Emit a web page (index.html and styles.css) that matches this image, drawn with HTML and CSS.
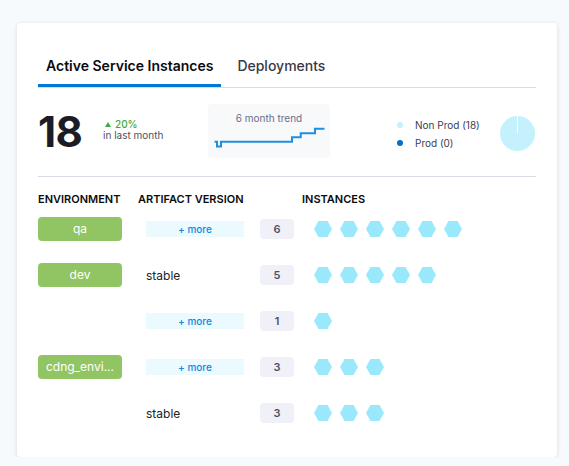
FILE: index.html
```html
<!DOCTYPE html>
<html>
<head>
<meta charset="utf-8">
<link rel="stylesheet" href="styles.css">
</head>
<body>
<div class="card">
  <div class="tabs">
    <div class="tab active">Active Service Instances</div>
    <div class="tab">Deployments</div>
  </div>
  <div class="stats">
    <div class="big">18</div>
    <div class="change">
      <div class="up"><span class="tri"></span>20%</div>
      <div class="sub">in last month</div>
    </div>
    <div class="trend">
      <div class="trend-title">6 month trend</div>
      <svg class="trend-chart" width="122" height="34" viewBox="0 0 122 34">
        <polyline points="6.5,17.7 9,17.7 9,22.5 13,22.5 13,17.7 84,17.7 84,13.3 92.7,13.3 92.7,9.3 107,9.3 107,4.7 116.5,4.7" fill="none" stroke="#1e8fe1" stroke-width="2"/>
      </svg>
    </div>
    <div class="legend">
      <div class="legend-item"><span class="dot nonprod"></span>Non Prod (18)</div>
      <div class="legend-item"><span class="dot prod"></span>Prod (0)</div>
    </div>
    <div class="pie"><span class="pie-line"></span></div>
  </div>
  <div class="table">
    <div class="th">Environment</div>
    <div class="th th-art">Artifact Version</div>
    <div class="th">Instances</div>

    <div class="cell"><span class="env">qa</span></div>
    <div class="cell art"><span class="more">+ more</span><span class="count">6</span></div>
    <div class="cell inst"><i class="hex"></i><i class="hex"></i><i class="hex"></i><i class="hex"></i><i class="hex"></i><i class="hex"></i></div>

    <div class="cell"><span class="env">dev</span></div>
    <div class="cell art"><span class="ver">stable</span><span class="count">5</span></div>
    <div class="cell inst"><i class="hex"></i><i class="hex"></i><i class="hex"></i><i class="hex"></i><i class="hex"></i></div>

    <div class="cell"></div>
    <div class="cell art"><span class="more">+ more</span><span class="count">1</span></div>
    <div class="cell inst"><i class="hex"></i></div>

    <div class="cell"><span class="env" title="cdng_environment">cdng_envi...</span></div>
    <div class="cell art"><span class="more">+ more</span><span class="count">3</span></div>
    <div class="cell inst"><i class="hex"></i><i class="hex"></i><i class="hex"></i></div>

    <div class="cell"></div>
    <div class="cell art"><span class="ver">stable</span><span class="count">3</span></div>
    <div class="cell inst"><i class="hex"></i><i class="hex"></i><i class="hex"></i></div>
  </div>
</div>
</body>
</html>
```
FILE: styles.css
```css
* { box-sizing: border-box; }
html, body { margin: 0; padding: 0; }
body {
  background: #f7fafd;
  font-family: Inter, "Noto Sans", sans-serif;
  color: #22222a;
  padding: 23px 0 0 17px;
}
.card {
  width: 540px;
  height: 434px;
  background: #fff;
  border-radius: 4px;
  box-shadow: 0 1px 4px rgba(40, 50, 80, 0.16);
  padding: 33px 21px 21px;
}
.tabs {
  display: flex;
  border-bottom: 1px solid #d9dae6;
}
.tab {
  font-size: 14px;
  line-height: 20px;
  padding: 0 8px 11px;
  margin-right: 8px;
  font-weight: 500;
  color: #383946;
}
.tab.active {
  font-weight: 600;
  color: #0b0b0d;
  box-shadow: inset 0 -3px 0 #0278d5;
}
.stats {
  height: 89px;
  display: flex;
  align-items: center;
  border-bottom: 1px solid #d9dae6;
}
.big {
  font-size: 42px;
  font-weight: 700;
  line-height: 1;
  color: #1c1c28;
  width: 65px;
  letter-spacing: -0.5px;
}
.change {
  width: 105px;
  font-size: 10px;
  line-height: 11px;
  margin-top: -4px;
}
.up {
  color: #3daa45;
  font-weight: 500;
  display: flex;
  align-items: center;
}
.tri {
  width: 0;
  height: 0;
  border-left: 3.5px solid transparent;
  border-right: 3.5px solid transparent;
  border-bottom: 5px solid #3daa45;
  margin: 0 4px 0 2px;
}
.sub { color: #4f5162; }
.trend {
  width: 122px;
  height: 54px;
  background: #f8f9fb;
  border-radius: 4px;
  margin-top: -2px;
}
.trend-title {
  text-align: center;
  font-size: 10px;
  line-height: 12px;
  color: #6b6d85;
  padding-top: 8px;
}
.trend-chart { display: block; }
.legend {
  margin-left: 67px;
  font-size: 10px;
  color: #3c3d4f;
  margin-top: 4px;
}
.legend-item {
  display: flex;
  align-items: center;
  height: 18px;
}
.dot {
  width: 6px;
  height: 6px;
  border-radius: 50%;
  margin-right: 12px;
}
.nonprod { background: #c6f1fb; }
.prod { background: #0070cc; }
.pie {
  margin-left: auto;
  margin-right: 1px;
  width: 35px;
  height: 35px;
  border-radius: 50%;
  background: #c4f1fc;
  position: relative;
  margin-top: 2px;
}
.pie-line {
  position: absolute;
  left: 16.5px;
  top: 0;
  width: 1.5px;
  height: 17.5px;
  background: #fff;
}
.table {
  display: grid;
  grid-template-columns: 100px 164px 1fr;
  grid-auto-rows: 46px;
  grid-template-rows: 14px;
  margin-top: 15px;
}
.th {
  font-size: 11px;
  line-height: 14px;
  font-weight: 600;
  text-transform: uppercase;
  color: #0b0b0d;
}
.cell {
  display: flex;
  align-items: center;
}
.env {
  width: 84px;
  height: 24px;
  line-height: 24px;
  border-radius: 4px;
  background: #91c563;
  color: #fff;
  font-size: 12px;
  text-align: center;
  padding: 0 4px;
  white-space: nowrap;
}
.art { padding-left: 8px; }
.more {
  width: 98px;
  height: 16px;
  line-height: 16px;
  background: #eafaff;
  color: #0f88dc;
  font-size: 10px;
  font-weight: 500;
  text-align: center;
}
.ver {
  width: 98px;
  font-size: 12px;
  color: #22222a;
}
.count {
  margin-left: 16px;
  width: 34px;
  height: 20px;
  line-height: 20px;
  border-radius: 4px;
  background: #f0f1f8;
  color: #4f5162;
  font-size: 11px;
  font-weight: 600;
  text-align: center;
}
.inst {
  padding-left: 12px;
  gap: 8px;
}
.hex {
  display: block;
  width: 18px;
  height: 16px;
  background: #9ae8fc;
  clip-path: polygon(25% 0, 75% 0, 100% 50%, 75% 100%, 25% 100%, 0 50%);
}
```
